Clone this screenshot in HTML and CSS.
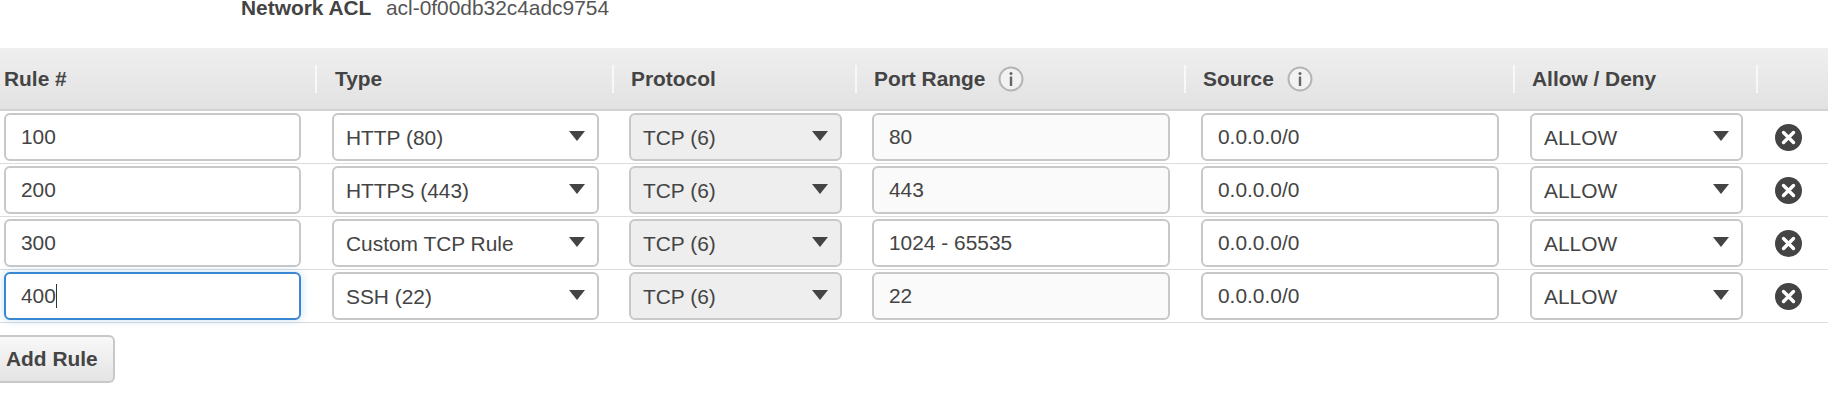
FILE: index.html
```html
<!DOCTYPE html>
<html lang="en">
<head>
<meta charset="utf-8">
<title>Network ACL rules</title>
<link rel="stylesheet" href="styles.css">
</head>
<body>
<div class="acl-line"><span class="acl-label">Network ACL</span><span class="acl-value">acl-0f00db32c4adc9754</span></div>
<div class="rules">
  <div class="row head">
    <div class="th">Rule #</div>
    <div class="th">Type</div>
    <div class="th">Protocol</div>
    <div class="th">Port Range<svg class="info" viewBox="0 0 26 26"><circle cx="13" cy="13" r="11.5" fill="#f2f2f2" stroke="#b5b5b5" stroke-width="2"/><circle cx="13" cy="7.5" r="1.5" fill="#666"/><rect x="11.8" y="10.5" width="2.4" height="9.5" fill="#666"/></svg></div>
    <div class="th">Source<svg class="info" viewBox="0 0 26 26"><circle cx="13" cy="13" r="11.5" fill="#f2f2f2" stroke="#b5b5b5" stroke-width="2"/><circle cx="13" cy="7.5" r="1.5" fill="#666"/><rect x="11.8" y="10.5" width="2.4" height="9.5" fill="#666"/></svg></div>
    <div class="th">Allow / Deny</div>
    <div class="th"></div>
  </div>
  <div class="row">
    <div class="cell first"><div class="field">100</div></div>
    <div class="cell"><div class="field pick"><span>HTTP (80)</span><svg class="arrow" viewBox="0 0 16 10"><path d="M0 0H16L8 10Z"/></svg></div></div>
    <div class="cell"><div class="field pick off"><span>TCP (6)</span><svg class="arrow" viewBox="0 0 16 10"><path d="M0 0H16L8 10Z"/></svg></div></div>
    <div class="cell wide"><div class="field soft">80</div></div>
    <div class="cell wide"><div class="field">0.0.0.0/0</div></div>
    <div class="cell"><div class="field pick"><span>ALLOW</span><svg class="arrow" viewBox="0 0 16 10"><path d="M0 0H16L8 10Z"/></svg></div></div>
    <div class="cell act"><svg class="remove" viewBox="0 0 27 27"><circle cx="13.5" cy="13.5" r="13.5" fill="#444"/><path d="M8.500 8.500L18.500 18.500M18.500 8.500L8.500 18.500" stroke="#fff" stroke-width="3.400" stroke-linecap="round"/></svg></div>
  </div>
  <div class="row">
    <div class="cell first"><div class="field">200</div></div>
    <div class="cell"><div class="field pick"><span>HTTPS (443)</span><svg class="arrow" viewBox="0 0 16 10"><path d="M0 0H16L8 10Z"/></svg></div></div>
    <div class="cell"><div class="field pick off"><span>TCP (6)</span><svg class="arrow" viewBox="0 0 16 10"><path d="M0 0H16L8 10Z"/></svg></div></div>
    <div class="cell wide"><div class="field soft">443</div></div>
    <div class="cell wide"><div class="field">0.0.0.0/0</div></div>
    <div class="cell"><div class="field pick"><span>ALLOW</span><svg class="arrow" viewBox="0 0 16 10"><path d="M0 0H16L8 10Z"/></svg></div></div>
    <div class="cell act"><svg class="remove" viewBox="0 0 27 27"><circle cx="13.5" cy="13.5" r="13.5" fill="#444"/><path d="M8.500 8.500L18.500 18.500M18.500 8.500L8.500 18.500" stroke="#fff" stroke-width="3.400" stroke-linecap="round"/></svg></div>
  </div>
  <div class="row">
    <div class="cell first"><div class="field">300</div></div>
    <div class="cell"><div class="field pick"><span>Custom TCP Rule</span><svg class="arrow" viewBox="0 0 16 10"><path d="M0 0H16L8 10Z"/></svg></div></div>
    <div class="cell"><div class="field pick off"><span>TCP (6)</span><svg class="arrow" viewBox="0 0 16 10"><path d="M0 0H16L8 10Z"/></svg></div></div>
    <div class="cell wide"><div class="field">1024 - 65535</div></div>
    <div class="cell wide"><div class="field">0.0.0.0/0</div></div>
    <div class="cell"><div class="field pick"><span>ALLOW</span><svg class="arrow" viewBox="0 0 16 10"><path d="M0 0H16L8 10Z"/></svg></div></div>
    <div class="cell act"><svg class="remove" viewBox="0 0 27 27"><circle cx="13.5" cy="13.5" r="13.5" fill="#444"/><path d="M8.500 8.500L18.500 18.500M18.500 8.500L8.500 18.500" stroke="#fff" stroke-width="3.400" stroke-linecap="round"/></svg></div>
  </div>
  <div class="row">
    <div class="cell first"><div class="field focus">400<span class="caret"></span></div></div>
    <div class="cell"><div class="field pick"><span>SSH (22)</span><svg class="arrow" viewBox="0 0 16 10"><path d="M0 0H16L8 10Z"/></svg></div></div>
    <div class="cell"><div class="field pick off"><span>TCP (6)</span><svg class="arrow" viewBox="0 0 16 10"><path d="M0 0H16L8 10Z"/></svg></div></div>
    <div class="cell wide"><div class="field soft">22</div></div>
    <div class="cell wide"><div class="field">0.0.0.0/0</div></div>
    <div class="cell"><div class="field pick"><span>ALLOW</span><svg class="arrow" viewBox="0 0 16 10"><path d="M0 0H16L8 10Z"/></svg></div></div>
    <div class="cell act"><svg class="remove" viewBox="0 0 27 27"><circle cx="13.5" cy="13.5" r="13.5" fill="#444"/><path d="M8.500 8.500L18.500 18.500M18.500 8.500L8.500 18.500" stroke="#fff" stroke-width="3.400" stroke-linecap="round"/></svg></div>
  </div>
</div>
<button class="add" type="button">Add Rule</button>
</body>
</html>
```
FILE: styles.css
```css
* { box-sizing: border-box; }
html, body { margin: 0; padding: 0; background: #fff; overflow: hidden; }
body { width: 1828px; height: 402px; font-family: "Liberation Sans", Arial, sans-serif; font-size: 20.9px; color: #444; }

.acl-line { display: flex; height: 48px; padding-left: 241px; line-height: 16px; }
.acl-label { font-weight: 700; width: 145px; }
.acl-value { color: #555; }

.row { display: grid; grid-template-columns: 317px 297px 243px 329px 329px 243px 70px; height: 53px; border-bottom: 1px solid #dcdcdc; align-items: center; }
.head { height: 63px; background: linear-gradient(#efefef, #e2e2e2); border-bottom: 2px solid #d2d2d2; padding-top: 1px; }

.th { height: 28px; display: flex; align-items: center; gap: 13px; padding-left: 17px; border-right: 2px solid #f8f8f8; font-weight: 700; line-height: 28px; color: #444; }
.th:first-child { padding-left: 4px; }
.th:nth-child(2) { padding-left: 18px; }
.th:last-child { border-right: 0; }

.cell { display: flex; align-items: center; height: 100%; padding: 0 15px; }
.first { padding: 0 16px 0 4px; }
.wide { padding: 0 16px 0 15px; }
.act { padding: 0 10px 0 0; justify-content: center; }

.field { width: 100%; height: 48px; display: flex; align-items: center; padding: 0 0 1px 15px; background: #fff; border: 2px solid #c8c8c8; border-radius: 6px; line-height: 24px; white-space: nowrap; }
.soft { background: #fafafa; }
.pick { justify-content: space-between; padding: 0 12px 0 12px; }
.pick span { position: relative; top: 1px; }
.off { background: #eee; }
.focus { border-color: #3b86d0; box-shadow: 0 0 8px rgba(90, 160, 230, .35); }
.caret { width: 1px; height: 24px; background: #333; }

.arrow { width: 16px; height: 10px; fill: #444; flex: none; margin-top: -2px; }
.remove { width: 27px; height: 27px; flex: none; }
.info { width: 26px; height: 26px; flex: none; }

.add { display: block; margin: 12px 0 0 0; height: 48px; width: 115px; padding: 0 0 0 6px; text-align: left; font: 700 20.9px "Liberation Sans", Arial, sans-serif; color: #444; background: linear-gradient(#f8f8f8, #e4e4e4); border: 2px solid #c8c8c8; border-left: 0; border-radius: 0 6px 6px 0; }
```
